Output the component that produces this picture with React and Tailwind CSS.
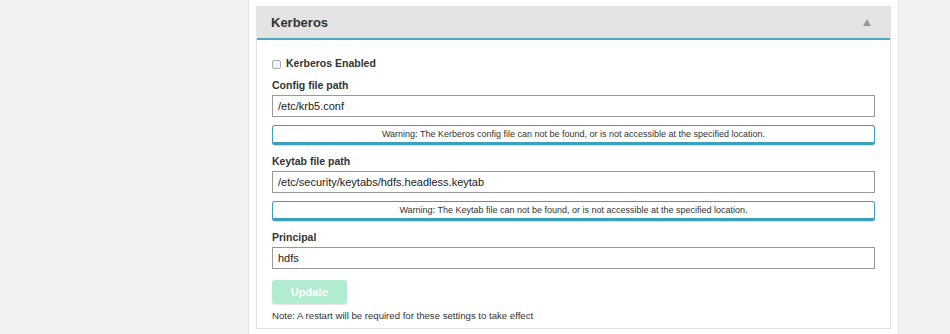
import React from 'react';

const Field = ({ label, value }) => (
    <>
        <div className="mt-[8px] h-[16px] leading-[16px] text-[10.5px] font-bold text-[#333]">{label}</div>
        <div className="mt-[2px] h-[22px] border border-[#999] bg-white pl-[5px] text-[11px] leading-[20px] text-[#222]">{value}</div>
    </>
);

const Warning = ({ children }) => (
    <div className="mt-[8px] h-[20px] rounded-[3px] border border-b-[3px] border-[#3c9fbc] bg-white text-center text-[9px] leading-[16px] text-[#333] shadow-[0_1px_1px_rgba(0,0,0,0.15)]">
        {children}
    </div>
);

export default function App() {
    return (
        <div className="flex h-[334px] w-[950px] bg-white font-['Liberation_Sans',Arial,sans-serif]">
            <div className="w-[249px] border-r border-[#e6e6e6] bg-[#f1f1f1]"></div>
            <div className="w-[649px] px-[7px] pt-[6px]">
                <div className="border border-[#e3e3e3]">
                    <div className="flex h-[33px] items-center justify-between border-b-2 border-[#4aa8c2] bg-[#e4e4e4] pl-[14px] pr-[19px]">
                        <span className="text-[13px] font-bold text-[#333]">Kerberos</span>
                        <svg width="8" height="7" viewBox="0 0 8 7"><path d="M4 0 L8 7 L0 7 Z" fill="#999" /></svg>
                    </div>
                    <div className="px-[15px] pt-[16px] pb-[5px]">
                        <label className="flex h-[16px] items-center gap-[5px] text-[10.5px] font-bold text-[#333]">
                            <span className="h-[9px] w-[9px] rounded-[2px] border border-[#aaa] bg-[#f4f4f4]"></span>
                            Kerberos Enabled
                        </label>
                        <div className="mt-[5px] h-[16px] leading-[16px] text-[10.5px] font-bold text-[#333]">Config file path</div>
                        <div className="mt-[2px] h-[22px] border border-[#999] bg-white pl-[5px] text-[11px] leading-[20px] text-[#222]">/etc/krb5.conf</div>
                        <Warning>Warning: The Kerberos config file can not be found, or is not accessible at the specified location.</Warning>
                        <Field label="Keytab file path" value="/etc/security/keytabs/hdfs.headless.keytab" />
                        <Warning>Warning: The Keytab file can not be found, or is not accessible at the specified location.</Warning>
                        <Field label="Principal" value="hdfs" />
                        <button className="mt-[11px] block h-[24px] w-[75px] rounded-[3px] bg-[#b2ecd0] text-[11px] font-bold text-white shadow-[0_1px_1px_rgba(0,0,0,0.1)]">Update</button>
                        <div className="mt-[5px] h-[14px] text-[9.6px] leading-[14px] text-[#333]">Note: A restart will be required for these settings to take effect</div>
                    </div>
                </div>
            </div>
            <div className="flex-1 border-l border-[#e8e8e8] bg-[#f1f1f1]"></div>
        </div>
    );
}
